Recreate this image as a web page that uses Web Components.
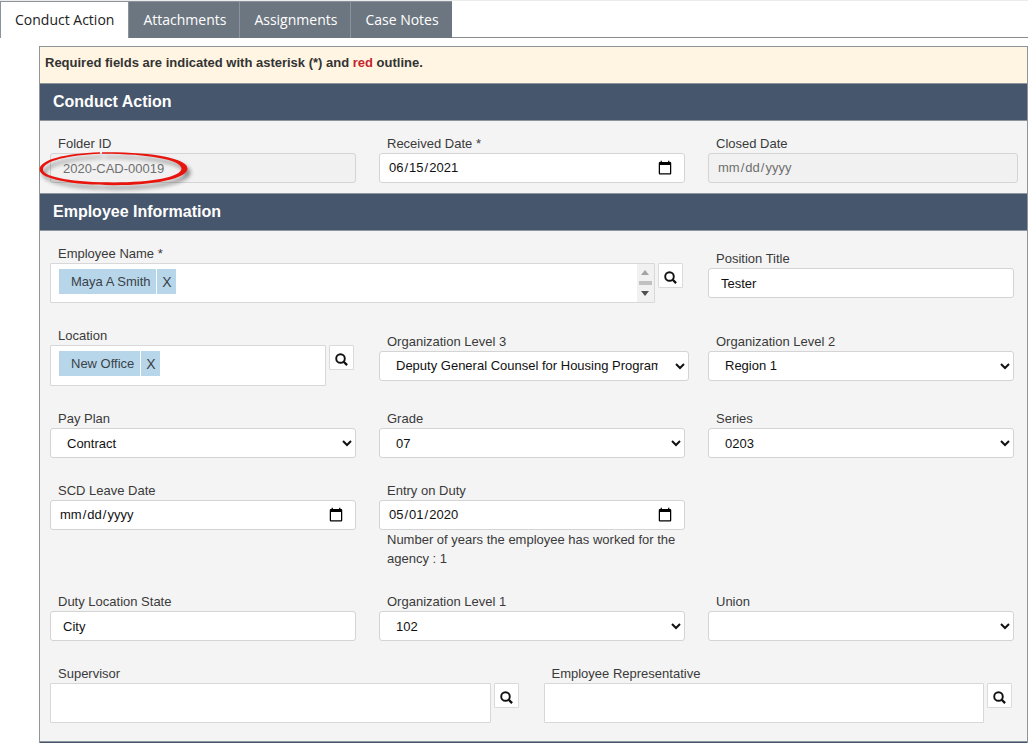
<!DOCTYPE html>
<html lang="en">
<head>
<meta charset="utf-8">
<title>Conduct Action</title>
<style>
body {
    margin: 0;
    background: #fff;
    color: #3a3a3a;
    font: 13px/18px "Liberation Sans", Arial, sans-serif;
}
</style>
</head>
<body>

<tab-bar>
    <tab-item active>Conduct Action</tab-item>
    <tab-item>Attachments</tab-item>
    <tab-item>Assignments</tab-item>
    <tab-item>Case Notes</tab-item>
</tab-bar>

<form-panel>
    <span slot="notice">Required fields are indicated with asterisk (*) and <required-word>red</required-word> outline.</span>

    <form-section heading="Conduct Action">
        <form-field label="Folder ID" value="2020-CAD-00019" disabled>
            <callout-ring slot="mark"></callout-ring>
        </form-field>
        <form-field label="Received Date *" type="date" value="2021-06-15"></form-field>
        <form-field label="Closed Date" type="date" disabled wide></form-field>
    </form-section>

    <form-section heading="Employee Information" roomy>
        <lookup-field label="Employee Name *" span="4" scroll>
            <name-chip>Maya A Smith</name-chip>
        </lookup-field>
        <form-field label="Position Title" value="Tester"></form-field>

        <lookup-field label="Location" tall>
            <name-chip>New Office</name-chip>
        </lookup-field>
        <form-field label="Organization Level 3" type="select" value="Deputy General Counsel for Housing Programs" wide></form-field>
        <form-field label="Organization Level 2" type="select" value="Region 1"></form-field>

        <form-field label="Pay Plan" type="select" value="Contract"></form-field>
        <form-field label="Grade" type="select" value="07"></form-field>
        <form-field label="Series" type="select" value="0203"></form-field>

        <form-field label="SCD Leave Date" type="date" top></form-field>
        <form-field label="Entry on Duty" type="date" value="2020-05-01" top>
            <span slot="help">Number of years the employee has worked for the agency : 1</span>
        </form-field>
        <grid-spacer></grid-spacer>

        <form-field label="Duty Location State" value="City"></form-field>
        <form-field label="Organization Level 1" type="select" value="102"></form-field>
        <form-field label="Union" type="select"></form-field>

        <lookup-field label="Supervisor" span="3"></lookup-field>
        <lookup-field label="Employee Representative" span="3"></lookup-field>
    </form-section>
</form-panel>

<script>
const fieldStyles = /*html*/ `
<style>
:host {
    display: block;
    grid-column: span 2;
    position: relative;
    min-width: 0;
    box-sizing: border-box;
    padding: 0 13px 0 10px;
}
:host([wide]) { padding-right: 9px; }
:host([top]) { align-self: start; }
* { box-sizing: border-box; }
label {
    display: block;
    padding-left: 8px;
}
input, select {
    display: block;
    width: 100%;
    height: 30px;
    margin: 0;
    border: 1px solid #d4d4d4;
    border-radius: 3px;
    background-color: #fff;
    color: #111;
    font: inherit;
    padding: 0 12px;
}
select { padding-right: 14px; }
input[type=date] { padding: 0 9px 0 8px; }
input::-webkit-calendar-picker-indicator {
    width: 16px;
    height: 16px;
}
input:disabled {
    background: #f1f1f1;
    color: #6f6f6f;
}
</style>`;

function define(name, html, setup) {
  const template = document.createElement("template");
  template.innerHTML = html;
  customElements.define(name, class extends HTMLElement {
    constructor() {
      super();
      this.attachShadow({ mode: "open" });
    }
    connectedCallback() {
      if (this.shadowRoot.childNodes.length) return;
      this.shadowRoot.appendChild(template.content.cloneNode(true));
      if (setup) setup(this, this.shadowRoot);
    }
  });
}

define("tab-bar", /*html*/ `
<style>
:host {
    display: block;
    border-top: 1px solid #ececec;
    border-bottom: 1px solid #8a8d90;
    font: 14px/20px "Open Sans", "Noto Sans", sans-serif;
}
nav {
    display: flex;
    margin-bottom: -1px;
}
</style>
<nav><slot></slot></nav>`);

define("tab-item", /*html*/ `
<style>
:host { display: block; }
button {
    display: block;
    height: 37px;
    margin: 0;
    padding: 0 13px 0 14px;
    border: solid #8b949c;
    border-width: 1px 0 0 1px;
    background: #6c7680;
    color: #fff;
    font: inherit;
}
:host([active]) button {
    background: #fff;
    color: #222;
    padding-right: 14px;
}
</style>
<button type="button"><slot></slot></button>`);

define("required-word", /*html*/ `
<style>:host { color: #c4262e; }</style><slot></slot>`);

define("form-panel", /*html*/ `
<style>
:host {
    display: block;
    margin: 8px 0 0 39px;
    border: solid #8d949a;
    border-width: 1px 1px 0;
}
.notice {
    padding: 7px 5px 11px;
    background: #fff5e2;
    color: #333;
    font-weight: bold;
}
.next {
    height: 1px;
    border-top: 1px solid #8d949a;
    background: #46566d;
}
</style>
<div class="notice"><slot name="notice"></slot></div>
<slot></slot>
<div class="next"></div>`);

define("form-section", /*html*/ `
<style>
:host { display: block; }
h2 {
    margin: 0;
    padding: 9px 13px;
    border: solid #8d949a;
    border-width: 1px 0;
    background: #46566d;
    color: #fff;
    font-size: 16px;
    line-height: 18px;
}
.fields {
    display: grid;
    grid-template-columns: repeat(6, minmax(0, 1fr));
    row-gap: 24px;
    align-items: center;
    padding: 14px 0 10px;
    background: #f4f4f4;
}
:host([roomy]) .fields { padding-bottom: 18px; }
</style>
<h2></h2>
<div class="fields"><slot></slot></div>`, (el, root) => {
  root.querySelector("h2").textContent = el.getAttribute("heading");
});

define("grid-spacer", /*html*/ `
<style>:host { display: block; grid-column: span 2; }</style>`);

define("form-field", fieldStyles + /*html*/ `
<style>
::slotted([slot=help]) {
    display: block;
    padding: 0 0 1px 8px;
    line-height: 19px;
}
</style>
<label for="control"></label>
<slot name="help"></slot>
<slot name="mark"></slot>`, (el, root) => {
  const label = root.querySelector("label");
  const type = el.getAttribute("type") || "text";
  const value = el.getAttribute("value") || "";
  const control = document.createElement(type === "select" ? "select" : "input");
  control.id = "control";
  if (type === "select") {
    control.add(new Option(value, value));
  } else {
    control.type = type;
    control.value = value;
  }
  control.disabled = el.hasAttribute("disabled");
  label.textContent = el.getAttribute("label");
  label.after(control);
});

define("lookup-field", fieldStyles + /*html*/ `
<style>
:host { padding-right: 15px; }
:host([span="3"]) { grid-column: span 3; }
:host([span="4"]) { grid-column: span 4; }
.row {
    display: flex;
    align-items: flex-start;
    gap: 3px;
}
.box {
    flex: 1;
    min-width: 0;
    display: flex;
    height: 40px;
    border: 1px solid #d8d8d8;
    border-radius: 1px;
    background: #fff;
}
:host([tall]) .box { height: 41px; }
.chips { padding: 5px 0 0 8px; }
.box input {
    flex: 1;
    min-width: 0;
    width: auto;
    height: auto;
    border: 0;
    background: none;
}
.bar {
    display: none;
    width: 17px;
    background: #f1f1f1;
}
:host([scroll]) .bar { display: block; }
button {
    display: grid;
    place-items: center;
    width: 25px;
    height: 25px;
    margin: 0;
    padding: 4px 0 0;
    border: 1px solid #dadada;
    border-radius: 1px;
    background: #fff;
}
</style>
<label for="search"></label>
<div class="row">
    <div class="box">
        <div class="chips"><slot></slot></div>
        <input id="search" type="text">
        <svg class="bar" viewBox="0 0 17 38">
            <path d="M4 11h8L8 6z" fill="#a3a3a3"/>
            <path d="M2 17h13v4H2z" fill="#c1c1c1"/>
            <path d="M4 27h8l-4 5z" fill="#505050"/>
        </svg>
    </div>
    <button type="button" aria-label="Search">
        <svg width="13" height="13" viewBox="0 0 13 13" fill="none" stroke="#111">
            <circle cx="5.500" cy="5.500" r="4.300" stroke-width="1.900"/>
            <path d="M8.700 8.700l3.400 3.400" stroke-width="2.300"/>
        </svg>
    </button>
</div>`, (el, root) => {
  root.querySelector("label").textContent = el.getAttribute("label");
});

define("name-chip", /*html*/ `
<style>
:host {
    display: flex;
    gap: 1px;
    height: 25px;
    color: #3a4249;
    line-height: 25px;
    white-space: nowrap;
}
span {
    padding: 0 6px 0 12px;
    background: #b8d6ea;
}
button {
    width: 19px;
    margin: 0;
    padding: 2px 0 0;
    border: 0;
    background: #b8d6ea;
    color: inherit;
    font: inherit;
    font-size: 14px;
    line-height: 23px;
}
</style>
<span><slot></slot></span><button type="button">X</button>`);

// hand-drawn style ring laid over the folder number
define("callout-ring", /*html*/ `
<style>
:host {
    position: absolute;
    left: -1px;
    top: 15px;
    pointer-events: none;
}
svg {
    display: block;
    filter: drop-shadow(3px 4px 2px rgba(0, 0, 0, .45));
}
</style>
<svg width="158" height="46" viewBox="0 0 158 46">
    <path fill="#e8150f" fill-rule="evenodd" d="M61 2.300C26 3.300 .5 10 .5 19.500C.5 28.800 33 35.200 75 35.200C116 35.200 148.500 28.500 148.500 18.500C148.500 8.500 115 1.800 63 2.200L63 3.800C109 3.700 142.500 10 142.500 18.500C142.500 27 112 32.400 75 32.400C36 32.400 4 27.500 4 19.500C4 11 30 4.800 61 3.700Z"/>
</svg>`);
</script>
</body>
</html>
